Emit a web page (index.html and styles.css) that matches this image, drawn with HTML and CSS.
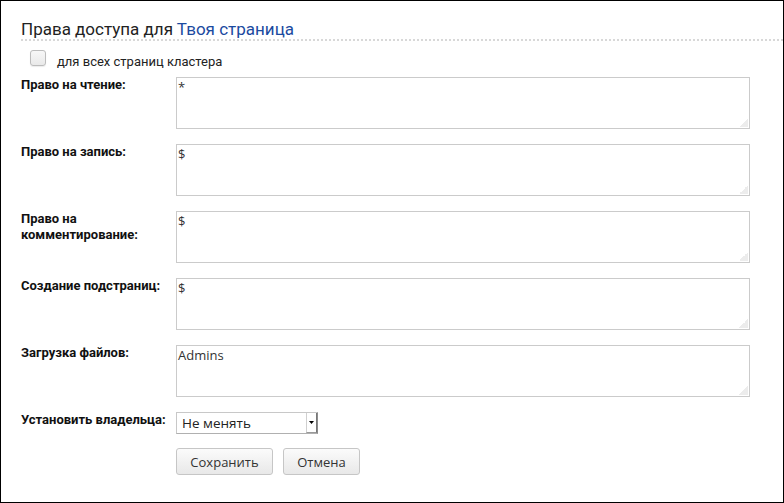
FILE: index.html
```html
<!DOCTYPE html>
<html lang="ru">
<head>
<meta charset="utf-8">
<title>Права доступа</title>
<link rel="stylesheet" href="styles.css">
</head>
<body>
<div class="page">
  <h2 class="title">Права доступа для <span class="title-link">Твоя страница</span></h2>
  <div class="cb-row">
    <input type="checkbox" class="cb" id="all"><label for="all" class="cb-label">для всех страниц кластера</label>
  </div>
  <div class="perms">
    <div class="lbl">Право на чтение:</div>
    <textarea class="ta">*</textarea>

    <div class="lbl">Право на запись:</div>
    <textarea class="ta">$</textarea>

    <div class="lbl">Право на комментирование:</div>
    <textarea class="ta">$</textarea>

    <div class="lbl">Создание подстраниц:</div>
    <textarea class="ta">$</textarea>

    <div class="lbl">Загрузка файлов:</div>
    <textarea class="ta">Admins</textarea>

    <div class="lbl">Установить владельца:</div>
    <div class="sel-wrap">
      <select class="sel"><option>Не менять</option></select>
      <span class="sel-arrow"><svg width="5" height="3" viewBox="0 0 5 3"><path d="M0 0H5L2.5 3Z" fill="#000"/></svg></span>
    </div>

    <div class="lbl"></div>
    <div class="btns">
      <button class="btn btn-save">Сохранить</button>
      <button class="btn btn-cancel">Отмена</button>
    </div>
  </div>
</div>
</body>
</html>
```
FILE: styles.css
```css
html, body {
  margin: 0;
  padding: 0;
  background: #fff;
}
.page {
  width: 784px;
  height: 503px;
  box-sizing: border-box;
  border: 1px solid #000;
  padding: 0 0 0 20px;
  font-family: Roboto, "Liberation Sans", sans-serif;
  color: #111;
}
.title {
  margin: 0;
  padding-top: 18px;
  font-size: 17px;
  line-height: 20px;
  font-weight: normal;
  color: #222;
  border-bottom: 2px dotted #d8d8d8;
}
.title-link {
  color: #1b4a9f;
}
.cb-row {
  margin-top: 9px;
  height: 20px;
  font-size: 13px;
  line-height: 16px;
  color: #222;
}
.cb {
  -webkit-appearance: none;
  appearance: none;
  display: inline-block;
  vertical-align: baseline;
  width: 16px;
  height: 16px;
  box-sizing: border-box;
  margin: 0 11px 0 9px;
  border: 1px solid #bcbcbc;
  border-radius: 3px;
  background: linear-gradient(#f7f7f7, #e9e9e9);
  box-shadow: 0 1px 1px rgba(0,0,0,0.08);
}
.perms {
  margin-top: 7px;
  display: grid;
  grid-template-columns: 155px 574px;
  row-gap: 15px;
  align-items: start;
}
.lbl {
  font-size: 13px;
  line-height: 16px;
  font-weight: bold;
  color: #111;
  padding-right: 6px;
}
.ta {
  display: block;
  box-sizing: border-box;
  width: 574px;
  height: 52px;
  margin: 0;
  border: 1px solid #cbcbcb;
  padding: 0 1px;
  font-family: "Open Sans", "DejaVu Sans", sans-serif;
  font-size: 13px;
  color: #333;
  background: #fff linear-gradient(135deg, transparent 50%, #ececec 50%) no-repeat right 1px bottom 1px / 9px 9px;
  outline: none;
  resize: none;
}
.sel-wrap {
  position: relative;
  width: 142px;
  height: 22px;
}
.sel {
  -webkit-appearance: none;
  appearance: none;
  display: block;
  width: 142px;
  height: 22px;
  box-sizing: border-box;
  margin: 0;
  border: 1px solid #c8c8c8;
  border-right-color: #8c8c8c;
  border-bottom-color: #b0b0b0;
  border-radius: 0;
  padding: 0 0 0 5px;
  font-family: "Open Sans", "DejaVu Sans", sans-serif;
  font-size: 13.5px;
  color: #222;
  background: #fff;
}
.sel-arrow {
  position: absolute;
  right: 1px;
  top: 1px;
  bottom: 1px;
  width: 11px;
  box-sizing: border-box;
  border-left: 1px solid #d0d0d0;
  border-right: 1px solid #777;
  border-bottom: 1px solid #999;
  background: #fff;
  display: flex;
  align-items: center;
  justify-content: center;
  pointer-events: none;
}
.btns {
  margin-top: -1px;
  display: flex;
  gap: 10px;
}
.btn {
  box-sizing: border-box;
  height: 27px;
  margin: 0;
  padding: 0 13px;
  border: 1px solid #c6c6c6;
  border-radius: 3px;
  background: linear-gradient(#fbfbfb, #e8e8e8);
  font-family: "Open Sans", "DejaVu Sans", sans-serif;
  font-size: 13px;
  color: #333;
}
.btn-save {
  width: 97px;
}
.btn-cancel {
  width: 77px;
}
```
